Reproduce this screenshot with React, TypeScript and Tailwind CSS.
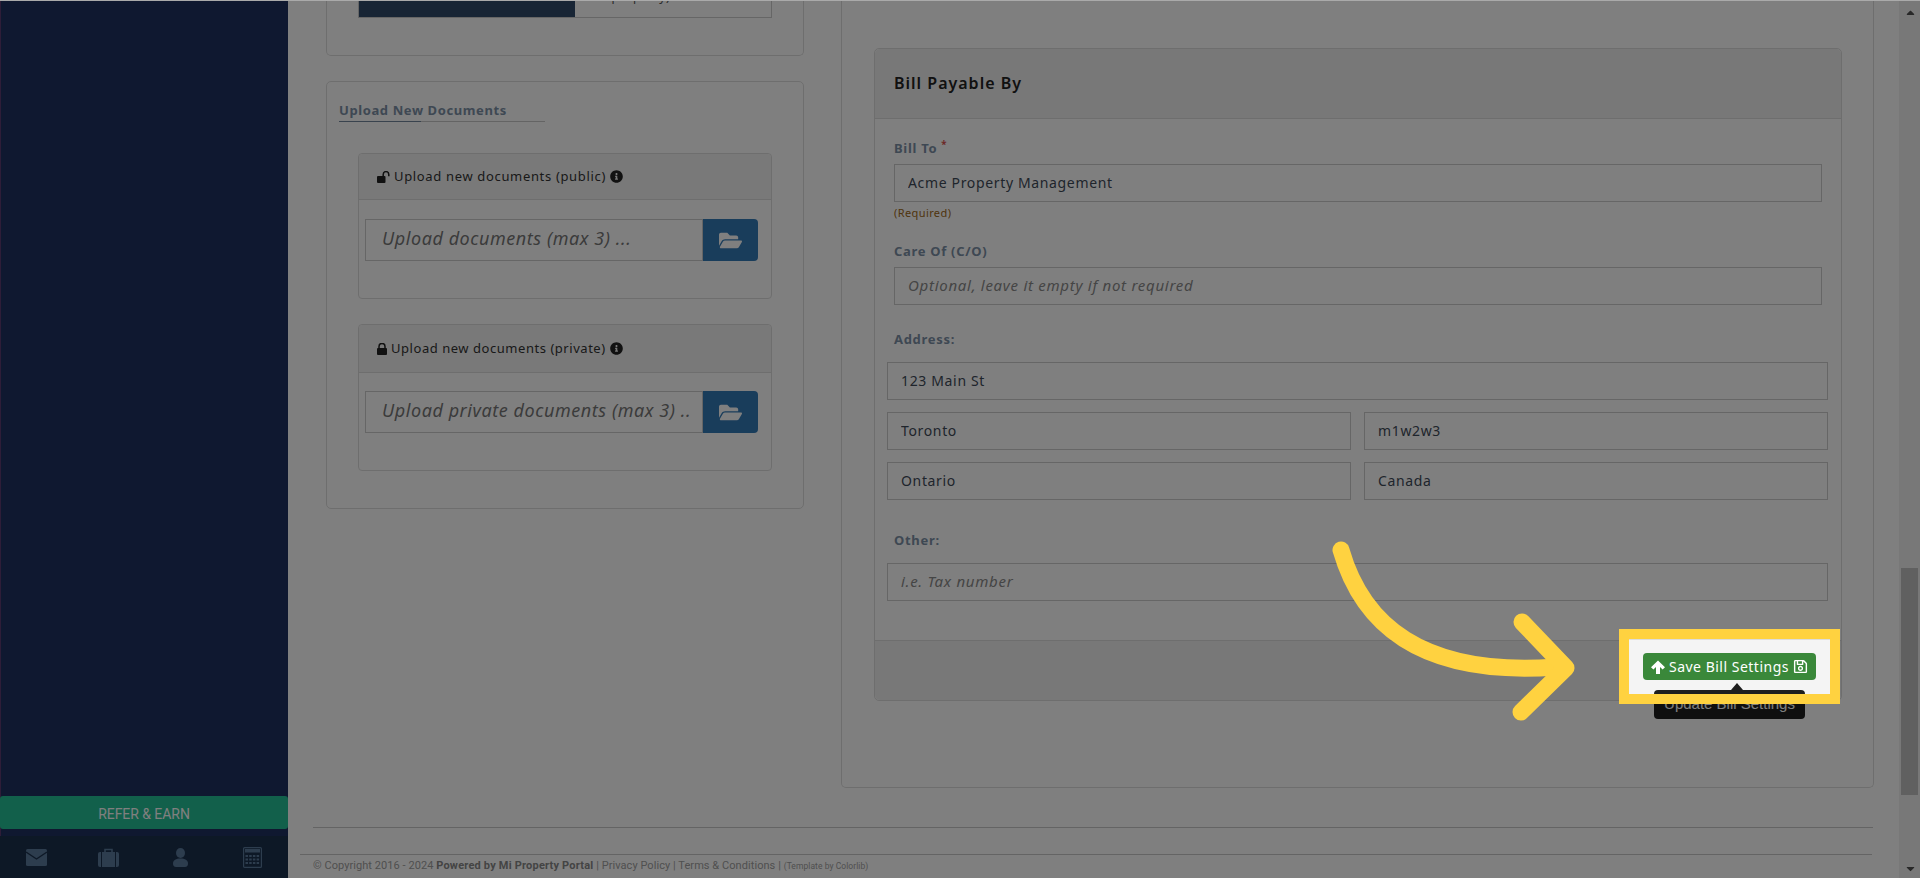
import React from "react";
import { FaInfoCircle, FaFolderOpen, FaRegSave, FaCaretUp, FaCaretDown } from "react-icons/fa";

function Field({ value, placeholder, className = "" }: { value?: string; placeholder?: string; className?: string }) {
  return (
    <input
      readOnly
      defaultValue={value}
      placeholder={placeholder}
      className={`block h-[38px] border border-[#ccc] bg-white px-[13px] pb-[2px] text-[14px] tracking-[0.65px] text-[#3f4a58] outline-none placeholder:text-[15px] placeholder:italic placeholder:tracking-[0.72px] placeholder:text-[#8a8a8a] ${className}`}
    />
  );
}

function Label({ children, className = "" }: { children: React.ReactNode; className?: string }) {
  return <div className={`text-[13px] font-bold leading-[18px] tracking-[0.7px] text-[#7d90a6] ${className}`}>{children}</div>;
}

function LockIcon() {
  return (
    <svg viewBox="0 0 10 12" className="h-[12px] w-[10px] shrink-0" fill="#222">
      <rect x="0" y="5" width="10" height="7" rx="1" />
      <path d="M2 5.5V3.4a3 3 0 0 1 6 0v2.1" fill="none" stroke="#222" strokeWidth="1.5" />
    </svg>
  );
}

function UnlockIcon() {
  return (
    <svg viewBox="0 0 13 12" className="h-[12px] w-[13px] shrink-0" fill="#222">
      <rect x="0" y="5" width="8.5" height="7" rx="1" />
      <path d="M6.2 5.5V3.4a2.8 2.8 0 0 1 5.6 0V5.2" fill="none" stroke="#222" strokeWidth="1.5" />
    </svg>
  );
}

function UploadCard({ icon, title, titleTrack, placeholder, headH, bodyPt, height, className = "" }: { icon: React.ReactNode; title: string; titleTrack: string; placeholder: string; headH: string; bodyPt: string; height: string; className?: string }) {
  return (
    <div className={`mx-[31px] flex ${height} flex-col rounded-[4px] border border-[#ddd] ${className}`}>
      <div className={`flex ${headH} shrink-0 items-center gap-[4px] rounded-t-[4px] border-b border-[#ddd] bg-[#f2f2f2] pl-[18px] text-[13px] ${titleTrack} text-[#333]`}>
        {icon}
        <span>{title}</span>
        <FaInfoCircle className="text-[13px] text-[#222]" />
      </div>
      <div className={`flex pl-[6px] ${bodyPt}`}>
        <div className="flex h-[42px] w-[338px] items-center whitespace-nowrap border border-[#ccc] bg-white pb-[3px] pl-[16px] text-[18px] italic tracking-[0.56px] text-[#777]">
          {placeholder}
        </div>
        <div className="flex h-[42px] w-[55px] items-center justify-center rounded-r-[4px] bg-[#337ab7] text-[23px] text-white">
          <FaFolderOpen />
        </div>
      </div>
    </div>
  );
}

export default function App() {
  return (
    <div className="relative flex h-[878px] w-full overflow-hidden border-t border-t-[#aaa] bg-white font-['Noto_Sans','Open_Sans',sans-serif]">
      {/* Sidebar */}
      <aside className="flex w-[288px] shrink-0 flex-col justify-end border-l border-l-[#5c3a70] bg-[#1e3060]">
        <div className="-ml-px mb-[7px] flex h-[33px] items-center justify-center rounded-[3px] bg-[#24c096] pt-[4px] font-['Roboto',sans-serif] text-[14px] tracking-[-0.05px] text-white">
          REFER &amp; EARN
        </div>
        <div className="-ml-px grid h-[42px] grid-cols-4 items-center justify-items-center bg-[#1a304c] pt-[1px]">
          <svg viewBox="0 0 21 17" className="h-[17px] w-[21px]">
            <rect width="21" height="17" rx="1.5" fill="#5a7a9c" />
            <path d="M0 3l10.5 7L21 3" fill="none" stroke="#1a304c" strokeWidth="1.4" />
          </svg>
          <svg viewBox="0 0 21 19" className="h-[19px] w-[21px]">
            <path d="M7 4V1.5h7V4" fill="none" stroke="#5a7a9c" strokeWidth="1.6" />
            <rect y="4" width="21" height="15" rx="2" fill="#5a7a9c" />
            <path d="M3.5 4v15M17.5 4v15" stroke="#1a304c" strokeWidth="1" />
          </svg>
          <svg viewBox="0 0 15 19" className="h-[19px] w-[15px]" fill="#5a7a9c">
            <ellipse cx="7.5" cy="5" rx="4.5" ry="5" />
            <path d="M0 15.5C0 12 3 10.5 7.5 10.5S15 12 15 15.5c0 2-1 3.5-3 3.5H3c-2 0-3-1.5-3-3.5z" />
          </svg>
          <svg viewBox="0 0 19 21" className="h-[21px] w-[19px]">
            <rect x="0.6" y="0.6" width="17.8" height="19.8" rx="1" fill="none" stroke="#5a7a9c" strokeWidth="1.2" />
            <rect x="2" y="2" width="15" height="3.5" fill="#5a7a9c" />
            <path d="M2.5 9h14M2.5 12.5h14M2.5 16h14" stroke="#5a7a9c" strokeWidth="2" strokeDasharray="2.5 1.2" />
          </svg>
        </div>
      </aside>

      {/* Main */}
      <main className="flex min-w-0 flex-1 flex-col">
        <div className="flex h-[826px] shrink-0 gap-[37px] pl-[38px]">
          {/* Left column */}
          <div className="w-[478px]">
            <div className="h-[55px] rounded-b-[5px] border border-t-0 border-[#ddd] px-[31px]">
              <div className="flex h-[17px] overflow-hidden border border-t-0 border-[#ccc]">
                <div className="w-[216px] bg-[#304b6b]" />
                <div className="mt-[-13px] pl-[12px] text-[12px] leading-[18px] tracking-[0.7px] text-[#555]">the property)</div>
              </div>
            </div>
            <div className="mt-[25px] h-[428px] rounded-[5px] border border-[#ddd] pt-[19px]">
              <div className="ml-[12px] w-[206px] border-b border-[#c8c8c8]">
                <div className="-mb-px w-[82px] whitespace-nowrap border-b border-[#73879c] pb-[2px] text-[13px] font-bold leading-[18px] tracking-[0.6px] text-[#7d90a6]">
                  Upload New Documents
                </div>
              </div>
              <UploadCard className="mt-[31px]" height="h-[146px]" bodyPt="pt-[19px]" titleTrack="tracking-[0.66px]" icon={<UnlockIcon />} title="Upload new documents (public)" placeholder="Upload documents (max 3) ..." headH="h-[46px]" />
              <UploadCard className="mt-[25px]" height="h-[147px]" bodyPt="pt-[18px]" titleTrack="tracking-[0.54px]" icon={<LockIcon />} title="Upload new documents (private)" placeholder="Upload private documents (max 3) .." headH="h-[48px]" />
            </div>
          </div>

          {/* Right column */}
          <div className="h-[787px] w-[1033px] rounded-b-[5px] border border-t-0 border-[#ddd] pl-[32px] pr-[31px] pt-[47px]">
            <div className="flex h-[653px] flex-col rounded-[5px] border border-[#ddd]">
              <div className="flex h-[70px] shrink-0 items-center rounded-t-[5px] border-b border-[#ddd] bg-[#f0f0f0] pb-[1px] pl-[19px] text-[16px] font-semibold tracking-[1px] text-[#222]">
                Bill Payable By
              </div>
              <div className="flex-1 px-[19px] pt-[20px]">
                <Label>
                  Bill To <sup className="text-[#d9534f]">*</sup>
                </Label>
                <Field value="Acme Property Management" className="mt-[7px] w-[928px]" />
                <div className="mt-[3px] text-[11px] leading-[16px] tracking-[0.4px] text-[#a06a20]">(Required)</div>
                <Label className="mt-[21px]">Care Of (C/O)</Label>
                <Field placeholder="Optional, leave it empty if not required" className="mt-[7px] w-[928px]" />
                <Label className="mt-[25px]">Address:</Label>
                <div className="-mx-[7px] mt-[14px] flex flex-col gap-[12px]">
                  <Field value="123 Main St" className="w-[941px]" />
                  <div className="flex gap-[13px]">
                    <Field value="Toronto" className="w-[464px]" />
                    <Field value="m1w2w3" className="w-[464px]" />
                  </div>
                  <div className="flex gap-[13px]">
                    <Field value="Ontario" className="w-[464px]" />
                    <Field value="Canada" className="w-[464px]" />
                  </div>
                </div>
                <Label className="mt-[31px]">Other:</Label>
                <div className="-mx-[7px] mt-[14px]">
                  <Field placeholder="i.e. Tax number" className="w-[941px]" />
                </div>
              </div>
              <div className="h-[60px] shrink-0 rounded-b-[5px] border-t border-[#ddd] bg-[#f1f1f1]" />
            </div>
          </div>
        </div>

        <div className="ml-[25px] mr-[26px] border-t border-[#c8c8c8]" />
        <div className="ml-[12px] mr-[27px] mt-[26px] whitespace-nowrap border-t border-[#c8c8c8] pl-[13px] pt-[3px] font-['Roboto',sans-serif] text-[11px] leading-[16px] tracking-[0.06px] text-[#a0a0a0]">
          © Copyright 2016 - 2024 <b className="tracking-[0.2px] text-[#888]">Powered by Mi Property Portal</b> | Privacy Policy | Terms &amp; Conditions | <span className="text-[8.5px]">(Template by Colorlib)</span>
        </div>
      </main>

      {/* Scrollbar */}
      <div className="relative flex w-[21px] shrink-0 flex-col items-center justify-between bg-[#f1f1f1] pl-[2px] text-[13px] text-[#505050]">
        <FaCaretUp className="mt-[5px]" />
        <div className="absolute left-[2px] top-[567px] h-[227px] w-[17px] bg-[#c1c1c1]" />
        <FaCaretDown className="mb-[3px]" />
      </div>

      {/* Tooltip under the dimming layer */}
      <div className="absolute left-[1654px] top-[689px] flex h-[29px] w-[151px] items-center justify-center rounded-[4px] bg-[#1e1e1e] font-['Liberation_Sans',sans-serif] text-[15px] text-white">
        Update Bill Settings
      </div>

      {/* Dimming layer */}
      <div className="absolute inset-0 bg-black/50" />

      {/* Spotlight */}
      <div className="absolute left-[1619px] top-[628px] h-[75px] w-[221px] border-[10px] border-[#ffd240] bg-[#f4f4f4]">
        <div className="relative h-full w-full overflow-hidden border-t border-[#ddd]">
          <div className="absolute left-[14px] top-[13px] flex h-[27px] w-[173px] items-center justify-center gap-[4px] rounded-[4px] bg-[#3a883a] text-[14px] tracking-[0.5px] text-white">
            <svg viewBox="0 0 14 14" className="h-[14px] w-[14px] shrink-0" fill="white">
              <path d="M7 0.5 L14 7.3 L11.6 9.6 L9 7 V14 H5 V7 L2.4 9.6 L0 7.3 Z" />
            </svg>
            <span>Save Bill Settings</span>
            <FaRegSave className="text-[15px]" />
          </div>
          <div className="absolute left-[102px] top-[43px] h-0 w-0 border-x-[6px] border-b-[7px] border-x-transparent border-b-[#1e1e1e]" />
          <div className="absolute left-[25px] top-[50px] h-[8px] w-[151px] rounded-t-[4px] bg-[#1e1e1e]" />
        </div>
      </div>

      {/* Pointer arrow */}
      <svg className="absolute left-[1320px] top-[530px] h-[200px] w-[270px]" viewBox="1320 530 270 200" fill="none" stroke="#ffd240" strokeWidth="17" strokeLinecap="round" strokeLinejoin="round">
        <path d="M1341 549 C1362 622 1420 676 1556 666" />
        <path d="M1522 621 L1566 667 L1521 711" />
      </svg>
    </div>
  );
}
